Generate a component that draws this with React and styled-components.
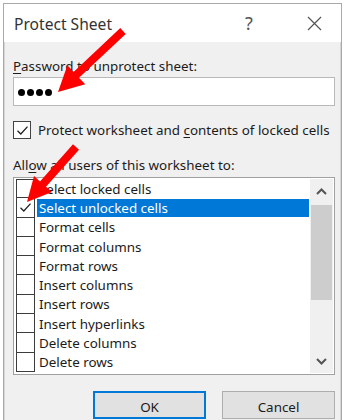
import React from 'react'
import styled, { createGlobalStyle } from 'styled-components';

const GlobalStyle = createGlobalStyle`
    html, body {
        margin: 0;
        padding: 0;
        background: #fff;
        width: 348px;
        height: 420px;
        overflow: hidden;
    }
    body {
        font-family: "Noto Sans", "Open Sans", sans-serif;
        color: #1b1b1b;
    }
`;

const Page = styled.div`
    position: relative;
    width: 348px;
    height: 420px;
    padding: 3px 6px 0 3px;
    box-sizing: border-box;
`;

const Window = styled.div`
    height: 100%;
    border: 1px solid #a9a9a9;
    border-bottom: 0;
    box-shadow: inset 0 0 0 1px #d6d6d6;
    background: #f0f0f0;
    display: flex;
    flex-direction: column;
    overflow: hidden;
`;

const TitleBar = styled.div`
    height: 38px;
    flex: none;
    background: #fff;
    display: flex;
    align-items: center;
    padding: 0 0 0 10px;
    font-size: 15.6px;
    color: #333;
`;

const Title = styled.div`
    flex: 1;
    padding-top: 2px;
`;

const TitleButton = styled.div`
    width: ${p => p.$w}px;
    text-align: center;
    display: flex;
    justify-content: center;
    align-items: center;
    font-size: 18px;
    color: #555;
`;

const Body = styled.div`
    flex: 1;
    padding: 14px 6px 0 9px;
    display: flex;
    flex-direction: column;
    font-size: 13.4px;
`;

const Label = styled.div`
    line-height: 20px;
    margin-top: ${p => p.$mt || 0}px;
`;

const Key = styled.span`
    text-decoration: underline;
    text-underline-offset: 2px;
`;

const PasswordInput = styled.div`
    margin-top: 1px;
    height: 29px;
    box-sizing: border-box;
    border: 1px solid #b9b9b9;
    background: #fff;
    display: flex;
    align-items: center;
    padding-left: 4px;
    gap: 2px;
`;

const Dot = styled.span`
    width: 7px;
    height: 7px;
    border-radius: 50%;
    background: #000;
    margin-top: 1px;
`;

const CheckRow = styled.div`
    margin-top: 15px;
    display: flex;
    align-items: center;
    gap: 7px;
    height: 18px;
`;

const Box = styled.div`
    width: 18px;
    height: 18px;
    box-sizing: border-box;
    border: 1px solid #444;
    background: #fff;
    display: flex;
    align-items: center;
    justify-content: center;
    flex: none;
`;

const ListBox = styled.div`
    margin-top: 2px;
    height: 198px;
    box-sizing: border-box;
    border: 1px solid #a0a0a0;
    background: #fff;
    display: flex;
    padding: 1px;
`;

const Rows = styled.div`
    flex: 1;
    display: flex;
    flex-direction: column;
    padding-left: 1px;
`;

const Row = styled.div`
    height: 19.3px;
    display: flex;
    align-items: center;
`;

const RowBox = styled.div`
    width: 19px;
    height: 19.3px;
    box-sizing: border-box;
    border: 1px solid #3c3c3c;
    border-top-width: ${p => p.$first ? 1 : 0}px;
    background: #fff;
    flex: none;
    display: flex;
    align-items: center;
    justify-content: center;
`;

const RowText = styled.div`
    flex: 1;
    height: 18px;
    margin-left: 2px;
    margin-right: 1px;
    padding-left: 2px;
    display: flex;
    align-items: center;
    background: ${p => p.$selected ? '#0078d7' : 'transparent'};
    color: ${p => p.$selected ? '#fff' : '#1b1b1b'};
`;

const ScrollBar = styled.div`
    width: 23px;
    background: #f0f0f0;
    display: flex;
    flex-direction: column;
    align-items: stretch;
`;

const ScrollArrow = styled.div`
    height: 24px;
    display: flex;
    align-items: center;
    justify-content: center;
`;

const Track = styled.div`
    flex: 1;
    padding: 0 1px;
    display: flex;
    flex-direction: column;
`;

const Thumb = styled.div`
    margin-top: 2px;
    height: 95px;
    background: #cdcdcd;
`;

const Buttons = styled.div`
    margin-top: 16px;
    display: flex;
    justify-content: flex-end;
    gap: 16px;
`;

const Button = styled.div`
    width: 113px;
    height: 28px;
    box-sizing: border-box;
    border: ${p => p.$default ? '2px solid #0078d7' : '1px solid #adadad'};
    background: #e1e1e1;
    display: flex;
    align-items: center;
    justify-content: center;
    padding-top: 3px;
    font-size: 13.4px;
`;

const Overlay = styled.svg`
    position: absolute;
    left: 0;
    top: 0;
    pointer-events: none;
`;

const Check = ({ size = 13 }) => (
    <svg width={size} height={size} viewBox="0 0 13 13">
        <path d="M1.5 6.8 L4.8 10 L11.5 2.6" fill="none" stroke="#222" strokeWidth="1.3" />
    </svg>
);

const Chevron = ({ up }) => (
    <svg width="11" height="7" viewBox="0 0 11 7">
        <path d={up ? "M1 6 L5.5 1.5 L10 6" : "M1 1 L5.5 5.5 L10 1"} fill="none" stroke="#555" strokeWidth="2" />
    </svg>
);

const items = [
    'Select locked cells',
    'Select unlocked cells',
    'Format cells',
    'Format columns',
    'Format rows',
    'Insert columns',
    'Insert rows',
    'Insert hyperlinks',
    'Delete columns',
    'Delete rows',
];

const App = () => {
    return (
        <Page>
            <GlobalStyle />
            <Window>
                <TitleBar>
                    <Title>Protect Sheet</Title>
                    <TitleButton $w={76}>?</TitleButton>
                    <TitleButton $w={54}>
                        <svg width="15" height="15" viewBox="0 0 15 15">
                            <path d="M1 1 L14 14 M14 1 L1 14" stroke="#555" strokeWidth="1.2" />
                        </svg>
                    </TitleButton>
                </TitleBar>
                <Body>
                    <Label><Key>P</Key>assword to unprotect sheet:</Label>
                    <PasswordInput>
                        <Dot /><Dot /><Dot /><Dot />
                    </PasswordInput>
                    <CheckRow>
                        <Box><Check /></Box>
                        <span>Protect worksheet and <Key>c</Key>ontents of locked cells</span>
                    </CheckRow>
                    <Label $mt={16}>All<Key>o</Key>w all users of this worksheet to:</Label>
                    <ListBox>
                        <Rows>
                            {items.map((item, i) => (
                                <Row key={item}>
                                    <RowBox $first={i === 0}>{i === 1 && <Check />}</RowBox>
                                    <RowText $selected={i === 1}>{item}</RowText>
                                </Row>
                            ))}
                        </Rows>
                        <ScrollBar>
                            <ScrollArrow><Chevron up /></ScrollArrow>
                            <Track>
                                <Thumb />
                            </Track>
                            <ScrollArrow><Chevron /></ScrollArrow>
                        </ScrollBar>
                    </ListBox>
                    <Buttons>
                        <Button $default>OK</Button>
                        <Button>Cancel</Button>
                    </Buttons>
                </Body>
            </Window>
            <Overlay width="348" height="420" viewBox="0 0 348 420">
                <polygon fill="#f00" points="125.7,33.9 120.3,28.1 73.6,71.9 67.4,65.3 58,92 85.2,84.3 79,77.7" />
                <polygon fill="#f00" points="79,149.7 73,144.3 40,181.4 34,176.1 27,202 52,192.1 46,186.8" />
            </Overlay>
        </Page>
    )
}

export default App
